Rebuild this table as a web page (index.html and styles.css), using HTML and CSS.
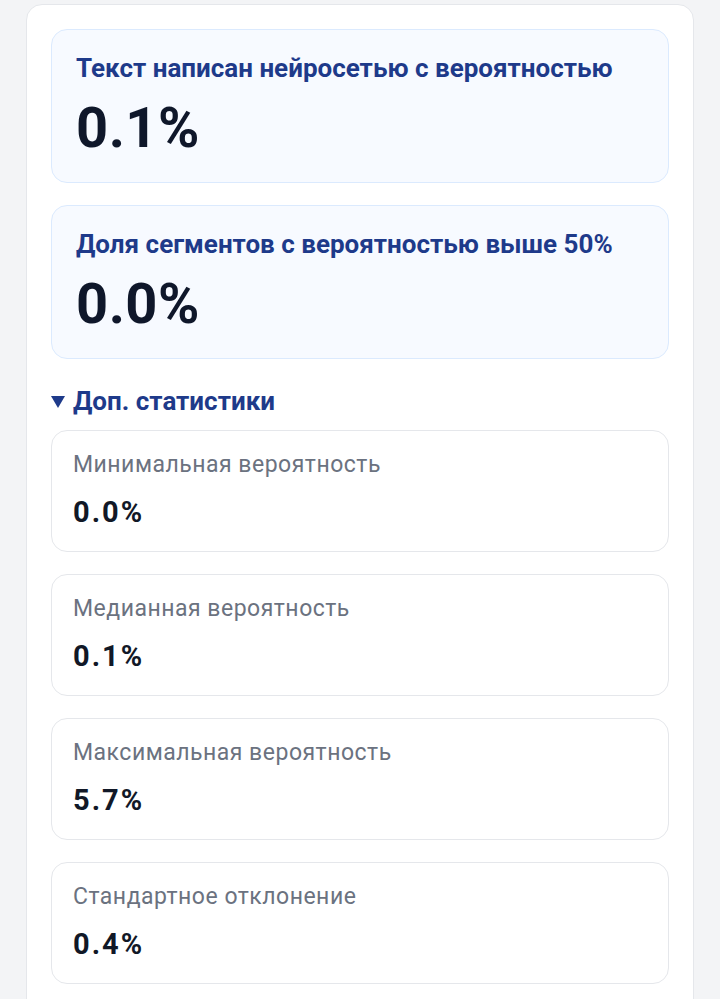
FILE: index.html
```html
<!DOCTYPE html>
<html lang="ru">
<head>
<meta charset="utf-8">
<title>Результат</title>
<link rel="stylesheet" href="styles.css">
</head>
<body>
<main class="page">
  <section class="card">
    <div class="hero">
      <div class="hero-title">Текст написан нейросетью с вероятностью</div>
      <div class="hero-value">0.1%</div>
    </div>
    <div class="hero">
      <div class="hero-title">Доля сегментов с вероятностью выше 50%</div>
      <div class="hero-value">0.0%</div>
    </div>
    <details class="extra" open>
      <summary class="extra-summary"><span class="tri"></span>Доп. статистики</summary>
      <div class="stats">
        <div class="stat">
          <div class="stat-label">Минимальная вероятность</div>
          <div class="stat-value">0.0%</div>
        </div>
        <div class="stat">
          <div class="stat-label">Медианная вероятность</div>
          <div class="stat-value">0.1%</div>
        </div>
        <div class="stat">
          <div class="stat-label">Максимальная вероятность</div>
          <div class="stat-value">5.7%</div>
        </div>
        <div class="stat">
          <div class="stat-label">Стандартное отклонение</div>
          <div class="stat-value">0.4%</div>
        </div>
      </div>
    </details>
  </section>
</main>
</body>
</html>
```
FILE: styles.css
```css
* { box-sizing: border-box; }
html, body {
  margin: 0;
  padding: 0;
  background: #f3f4f6;
  font-family: Roboto, "Noto Sans", "Liberation Sans", sans-serif;
}
.page {
  padding: 4px 26px 0;
}
.card {
  background: #ffffff;
  border: 1px solid #e5e7eb;
  border-radius: 16px;
  padding: 24px 24px 40px;
  display: flex;
  flex-direction: column;
  gap: 22px;
}
.hero {
  background: #f7faff;
  border: 1px solid #dbeafe;
  border-radius: 16px;
  padding: 22px 24px 22px;
}
.hero-title {
  color: #1e3a8a;
  font-weight: 700;
  font-size: 26px;
  line-height: 32px;
}
.hero-value {
  color: #0f172a;
  font-weight: 700;
  font-size: 56px;
  line-height: 64px;
  letter-spacing: 0.5px;
  margin-top: 12px;
}
.extra {
  margin-top: 4px;
}
.extra-summary {
  list-style: none;
  display: flex;
  align-items: center;
  color: #1e3a8a;
  font-weight: 700;
  font-size: 26px;
  line-height: 32px;
  cursor: pointer;
}
.extra-summary::-webkit-details-marker { display: none; }
.tri {
  width: 0;
  height: 0;
  border-left: 7px solid transparent;
  border-right: 7px solid transparent;
  border-top: 12px solid #1e3a8a;
  margin: 2px 8px 0 0;
}
.stats {
  display: flex;
  flex-direction: column;
  gap: 22px;
  margin-top: 13px;
}
.stat {
  background: #ffffff;
  border: 1px solid #e5e7eb;
  border-radius: 16px;
  padding: 19px 21px 22px;
}
.stat-label {
  color: #6b7280;
  font-size: 23px;
  line-height: 30px;
  letter-spacing: 0.5px;
}
.stat-value {
  color: #111827;
  font-weight: 700;
  font-size: 29px;
  line-height: 34px;
  letter-spacing: 2px;
  margin-top: 15px;
}
```
